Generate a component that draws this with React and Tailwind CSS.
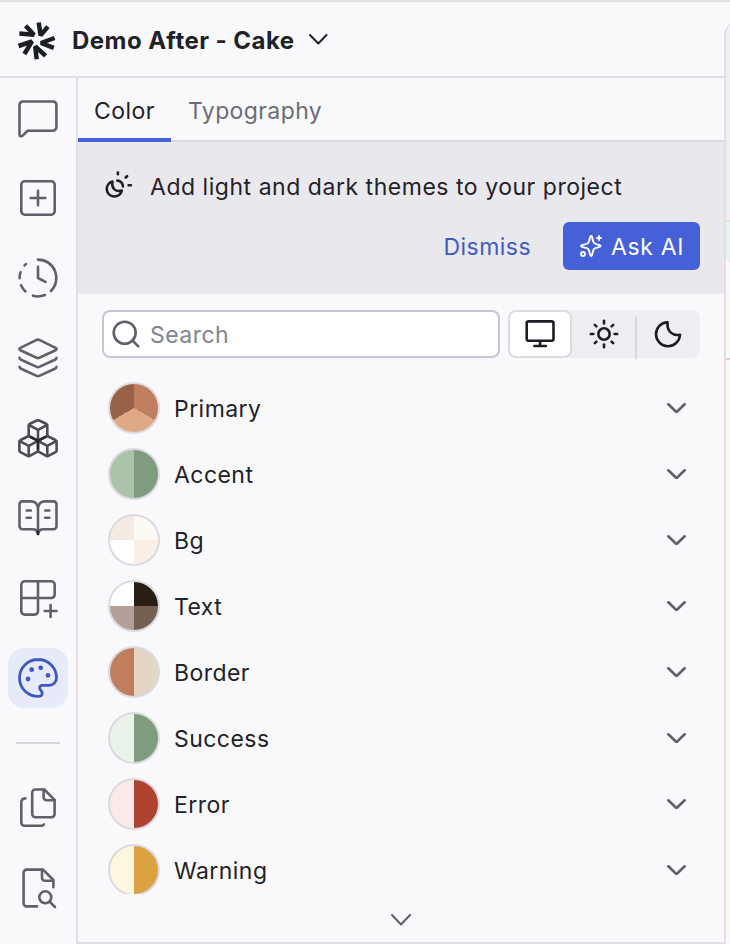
import React from "react";

// Path for a circular arc between two angles, in degrees clockwise from the x axis.
const arc = (cx, cy, r, from, to) => {
  const point = (deg) => {
    const a = (deg * Math.PI) / 180;
    return `${(cx + r * Math.cos(a)).toFixed(2)} ${(cy + r * Math.sin(a)).toFixed(2)}`;
  };
  return `M${point(from)}A${r} ${r} 0 0 1 ${point(to)}`;
};

function Icon({ size = 40, stroke = 2.6, className = "", children }) {
  return (
    <svg
      width={size}
      height={size}
      viewBox={`0 0 ${size} ${size}`}
      fill="none"
      stroke="currentColor"
      strokeWidth={stroke}
      strokeLinecap="round"
      strokeLinejoin="round"
      className={`shrink-0 overflow-visible ${className}`}
    >
      {children}
    </svg>
  );
}

const ChatIcon = () => (
  <Icon>
    <path d="M5 3.5H35a3.4 3.4 0 0 1 3.4 3.4V29.3a3.4 3.4 0 0 1-3.4 3.4H9.6L4.6 37.6C3.4 38.8 1.5 38.3 1.5 36.4V6.9A3.4 3.4 0 0 1 5 3.5z" />
  </Icon>
);
const AddIcon = () => (
  <Icon>
    <rect x="3.3" y="3.3" width="33.4" height="33.4" rx="3.4" />
    <path d="M12.7 20H27.3M20 12.7V27.3" />
  </Icon>
);
const HistoryIcon = () => (
  <Icon>
    <path d={arc(20, 20, 18.4, -90, 45)} />
    <path d={arc(20, 20, 18.4, 68, 106)} />
    <path d={arc(20, 20, 18.4, 133, 157)} />
    <path d={arc(20, 20, 18.4, 179, 198)} />
    <path d={arc(20, 20, 18.4, 223, 229)} />
    <path d="M20 8.7V20L27.5 23.8" />
  </Icon>
);
const LayersIcon = () => (
  <Icon>
    <path d="M18.7 1.9Q20 1.3 21.3 1.9L37.6 9.8Q39.6 11 37.6 12.2L21.3 19.8Q20 20.4 18.7 19.8L2.4 12.2Q.4 11 2.4 9.8z" />
    <path d="M1.5 19.9Q1.6 21 2.6 21.5L18.7 28.9Q20 29.5 21.3 28.9L37.4 21.5Q38.4 21 38.5 19.9" />
    <path d="M1.5 28.9Q1.6 30 2.6 30.5L18.7 37.9Q20 38.5 21.3 37.9L37.4 30.5Q38.4 30 38.5 28.9" />
  </Icon>
);
const CubesIcon = () => (
  <Icon className="text-[#4b4d56]">
    <path d="M18.9 2.5Q20 2 21.1 2.5L28.2 5.8Q29.3 6.4 29.3 7.6V18L20 22.7L10.7 18V7.6Q10.7 6.4 11.8 5.8z" />
    <path d="M11 7L20 11.9L29 7M20 12V22.7" />
    <path d="M10.7 18L2.6 22Q1.4 22.7 1.4 24V32.4Q1.4 33.6 2.5 34.2L9.6 37.8Q10.7 38.4 11.8 37.8L20 33.4V22.9" />
    <path d="M1.8 23.2L10.7 27.9L20 22.9M10.7 28V38" />
    <path d="M29.3 18L37.4 22Q38.6 22.7 38.6 24V32.4Q38.6 33.6 37.5 34.2L30.4 37.8Q29.3 38.4 28.2 37.8L20 33.4" />
    <path d="M38.2 23.2L29.3 27.9L20 22.9M29.3 28V38" />
    <path d="M13 19.2L20 22.8L27 19.2M20 22.8V31" stroke="#25272e" />
  </Icon>
);
const BookIcon = () => (
  <Icon>
    <path d="M20 10C19.4 6 17 3.4 13 3.4H4.4A2.9 2.9 0 0 0 1.5 6.3V28.3A2.9 2.9 0 0 0 4.4 31.2H14.5C17.5 31.2 19.6 32.6 20 36C20.4 32.6 22.5 31.2 25.5 31.2H35.6A2.9 2.9 0 0 0 38.5 28.3V6.3A2.9 2.9 0 0 0 35.6 3.4H27C23 3.4 20.6 6 20 10zM20 10V36" />
    <path d="M8.7 12.5H12.8M8.7 19.8H12.8M27.2 12.5H31.3M27.2 19.8H31.3" />
    <path d="M20 33.6V36" stroke="#25272e" />
  </Icon>
);
const BlocksIcon = () => (
  <Icon>
    <path d="M33.4 20H3.3V6.7A3.4 3.4 0 0 1 6.7 3.3H33.4A3.4 3.4 0 0 1 36.7 6.7V16.6A3.4 3.4 0 0 1 33.3 20M20 3.3V33.2A3.4 3.4 0 0 1 16.6 36.6H6.7A3.4 3.4 0 0 1 3.3 33.2V19" />
    <path d="M26.7 33H38.5M32.6 27V39" />
  </Icon>
);
const PaletteIcon = () => (
  <Icon stroke={2.8}>
    <path d="M20 1.5C9.6 1.5 1.5 9.8 1.5 20C1.5 30.4 10 38.6 21 38.3C23.6 38.2 24.7 36.2 24 34.3C23.2 32.5 21.7 31.6 21.7 30C21.7 28.4 22.8 27.4 24.4 27.4H31C35.4 27.4 38.5 24 38.5 19.5C38.5 10 30.6 1.5 20 1.5z" />
    <g fill="currentColor" stroke="none">
      <circle cx="13.7" cy="11.7" r="2.4" />
      <circle cx="22.7" cy="9.8" r="2.4" />
      <circle cx="30" cy="17.3" r="2.4" />
      <circle cx="10" cy="21" r="2.4" />
    </g>
  </Icon>
);
const CopyIcon = () => (
  <Icon>
    <path d="M26.3 1.5H17.4A3.2 3.2 0 0 0 14.2 4.7V26A3.2 3.2 0 0 0 17.4 29.2H33.4A3.2 3.2 0 0 0 36.6 26V11.8z" />
    <path d="M25.6 1.5V9.2A3 3 0 0 0 28.6 12.2H36.6" />
    <path d="M7.4 10.4Q3.3 10.6 3.3 14.5V34.6A3.2 3.2 0 0 0 6.5 37.8H21.8Q25.2 37.8 25.8 36.4" />
  </Icon>
);
const FileSearchIcon = () => (
  <Icon>
    <path d="M19 38.4H8.8A3.2 3.2 0 0 1 5.6 35.2V4.8A3.2 3.2 0 0 1 8.8 1.6H25L35.4 12V19.3" />
    <path d="M24 1.6V9.8A3 3 0 0 0 27 12.8H35" />
    <circle cx="27.3" cy="29.3" r="6" />
    <path d="M31.8 33.8L37 39" />
  </Icon>
);

const Logo = () => (
  <svg width="40" height="40" viewBox="0 0 40 40" fill="none" stroke="#1b1e24" strokeWidth="4.5" strokeLinejoin="bevel" className="shrink-0">
    <path d="M21.7 1.5L23.6 14.4L30.9 5.6" />
    <path d="M2.4 12.6L17 13.8L8.6 4.8" />
    <path d="M1.6 25L15 20.4L7.4 33" />
    <path d="M19.7 38.2L18.2 25.4L28.6 34.8" />
    <path d="M37.6 17L24 22L36.8 26.8" />
  </svg>
);

const Chevron = ({ width = 19, height = 10.5, stroke = 2, className = "" }) => (
  <svg
    width={width}
    height={height}
    viewBox={`0 0 ${width} ${height}`}
    fill="none"
    stroke="currentColor"
    strokeWidth={stroke}
    strokeLinecap="round"
    strokeLinejoin="round"
    className={`shrink-0 ${className}`}
  >
    <path d={`M${stroke / 2} ${stroke / 2}L${width / 2} ${height - stroke / 2}L${width - stroke / 2} ${stroke / 2}`} />
  </svg>
);

const RAIL = [
  ["Chat", ChatIcon],
  ["Add", AddIcon],
  ["History", HistoryIcon],
  ["Layers", LayersIcon],
  ["Components", CubesIcon],
  ["Library", BookIcon],
  ["Blocks", BlocksIcon],
  ["Theme", PaletteIcon],
];

const GROUPS = [
  ["Primary", ["#bf7f5f", "#e0a986", "#996145"]],
  ["Accent", ["#7f9c7f", "#abc3aa"]],
  ["Bg", ["#fdfaf5", "#f9efe7", "#ffffff", "#f4ece3"]],
  ["Text", ["#2b1f15", "#756154", "#b4a098", "#ffffff"]],
  ["Border", ["#e4d6c5", "#bf7f5f"]],
  ["Success", ["#7f9c7f", "#e9f3ea"]],
  ["Error", ["#b04232", "#fbeae8"]],
  ["Warning", ["#dca140", "#fef6df"]],
];

function Swatch({ colors }) {
  const step = 360 / colors.length;
  const stops = colors.map((c, i) => `${c} ${i * step}deg ${(i + 1) * step}deg`).join(", ");
  return (
    <span className="size-[52px] shrink-0 rounded-full bg-[#dadae0] p-[2px]">
      <span className="block size-full rounded-full" style={{ background: `conic-gradient(${stops})` }} />
    </span>
  );
}

function Rail() {
  return (
    <nav className="flex w-[78px] shrink-0 flex-col border-r-2 border-[#dfdfe4] pl-2 pt-2.5 text-[#5f616a]">
      <div className="flex flex-col gap-5">
        {RAIL.map(([label, Glyph]) => (
          <button
            key={label}
            aria-label={label}
            className={`flex size-[60px] items-center justify-center rounded-2xl ${
              label === "Theme" ? "bg-[#e6eaf9] text-[#3e58c4]" : ""
            }`}
          >
            <Glyph />
          </button>
        ))}
      </div>
      <div className="ml-2 mt-[34px] h-0.5 w-11 shrink-0 bg-[#d4d4da]" />
      <div className="mt-[34px] flex flex-col gap-5">
        <button aria-label="Pages" className="flex size-[60px] items-center justify-center"><CopyIcon /></button>
        <button aria-label="Find in files" className="flex size-[60px] items-center justify-center"><FileSearchIcon /></button>
      </div>
    </nav>
  );
}

function Banner() {
  return (
    <section className="flex h-[152px] shrink-0 flex-col bg-[#e9e8ed] px-6 pt-[27px]">
      <div className="flex h-9 items-center">
        <svg width="30" height="30" viewBox="0 0 30 30" fill="none" stroke="#1b1e24" strokeWidth="2.6" strokeLinecap="round" strokeLinejoin="round" className="shrink-0 overflow-visible">
          <path d="M10.4 9.6A7.6 7.6 0 1 0 19.8 18.6C16.4 19.4 13.6 18.9 12 17C10.4 15 9.8 12.4 10.4 9.6z" />
          <path d="M15.3 8.6A5.6 5.6 0 0 1 20.9 14.4" />
          <path d="M15.9 0.5V2.3M23.7 5.5L25.1 4.2M26.6 13.3H28.9" />
        </svg>
        <p className="ml-[18px] whitespace-nowrap tracking-[0.53px]">Add light and dark themes to your project</p>
      </div>
      <div className="mt-[17px] flex items-center justify-end gap-8">
        <button className="pt-0.5 text-[#3f5bc4]">Dismiss</button>
        <button className="flex h-12 w-[137px] items-center rounded-md bg-[#4660d8] pl-4 text-white">
          <svg width="24" height="24" viewBox="0 0 24 24" fill="none" stroke="currentColor" strokeWidth="1.9" strokeLinecap="round" strokeLinejoin="round" className="shrink-0">
            <path transform="translate(-0.8 -0.1)" d="M12 2.8C12.6 1.8 13.4 1.8 13.8 2.8L15 7.6Q15.5 9.3 17.3 9.9L21.4 11.2C22.6 11.8 22.6 12.6 21.4 13L17.3 14.2Q15.5 14.7 15 16.5L13.8 21.2C13.4 22.3 12.6 22.3 12 21.2L10.8 16.5Q10.3 14.7 8.5 14.2L3.8 13C2.6 12.6 2.6 11.8 3.8 11.2L8.5 9.9Q10.3 9.3 10.8 7.6z" />
            <path d="M20 2V6M18 4H22" />
            <circle cx="4" cy="20" r="2" />
          </svg>
          <span className="ml-2 pt-0.5 tracking-[0.65px]">Ask AI</span>
        </button>
      </div>
    </section>
  );
}

function Toolbar() {
  return (
    <div className="flex h-12 shrink-0 gap-2">
      <div className="flex w-[398px] items-center rounded-lg border-2 border-[#c7c5d4] bg-white pl-2 text-[#82848e]">
        <svg width="28" height="28" viewBox="0 0 28 28" fill="none" stroke="#5f616a" strokeWidth="2.6" strokeLinecap="round" className="shrink-0">
          <circle cx="12.7" cy="12.7" r="11" />
          <path d="M20.5 20.5L26.3 26.3" />
        </svg>
        <span className="ml-2.5 pt-0.5">Search</span>
      </div>
      <div className="flex w-48 rounded-lg bg-[#eeedf1] text-[#1b1e24]">
        <button aria-label="System" className="flex w-16 items-center justify-center rounded-lg border-2 border-[#dbdbe0] bg-white">
          <Icon size={32}>
            <rect x="2.7" y="3.4" width="26.8" height="19.3" rx="2" />
            <path d="M16.1 23V28M10.4 28H21.8" />
          </Icon>
        </button>
        <button aria-label="Light" className="flex w-16 items-center justify-center">
          <Icon size={32}>
            <circle cx="16" cy="16" r="5.7" />
            <path d="M16 2.8V5.4M16 26.6V29.2M2.8 16H5.4M26.6 16H29.2M6.8 6.8L8.4 8.4M23.6 23.6L25.2 25.2M6.8 25.2L8.4 23.6M23.6 8.4L25.2 6.8" />
          </Icon>
        </button>
        <span className="-ml-px -mb-px mt-1.5 w-0.5 bg-[#d9d8df]" />
        <button aria-label="Dark" className="-ml-px flex w-16 items-center justify-center">
          <Icon size={32}>
            <path d="M15.6 4.2A12 12 0 1 0 28 16.8C21 18 14.6 14 15.6 4.2z" />
          </Icon>
        </button>
      </div>
    </div>
  );
}

function ThemePanel() {
  return (
    <main className="flex min-w-0 flex-1 flex-col border-b-2 border-[#dfdfe4]">
      <div className="flex h-16 shrink-0 border-b-2 border-[#dbdae0]">
        <button className="-mb-0.5 w-[93px] border-b-4 border-[#4660d8] pt-1.5 text-center">Color</button>
        <button className="-mb-0.5 ml-[17px] border-b-4 border-transparent pt-1.5 tracking-[0.4px] text-[#6a6c75]">Typography</button>
      </div>
      <Banner />
      <div className="flex min-h-0 flex-1 flex-col px-6 pt-4">
        <Toolbar />
        <ul className="mt-6 flex h-[512px] shrink-0 flex-col gap-3.5 overflow-hidden">
          {GROUPS.map(([name, colors]) => (
            <li key={name} className="flex shrink-0 items-center pl-1.5 pr-[14.5px]">
              <Swatch colors={colors} />
              <span className="ml-3.5 flex-1 pt-0.5">{name}</span>
              <Chevron stroke={2.7} className="text-[#5f616a]" />
            </li>
          ))}
        </ul>
        <Chevron width={20} height={11.5} className="mt-5 self-center text-[#5f616a]" />
      </div>
    </main>
  );
}

export default function App() {
  return (
    <div className="flex h-[944px] w-[730px] flex-col overflow-hidden border-t-2 border-[#e2e1df] bg-[#f9f9fc] font-['Inter','Liberation_Sans',sans-serif] text-[23px] leading-8 tracking-[0.45px] text-[#1f2228]">
      <div className="flex min-h-0 flex-1">
        <div className="flex w-[724px] flex-col">
          <header className="flex h-[76px] shrink-0 items-center border-b-2 border-[#dfdfe4] pl-[17px] pt-[3px]">
            <Logo />
            <h1 className="ml-[15px] text-[24px] leading-8 font-bold tracking-[0.45px]">Demo After - Cake</h1>
            <Chevron width={18.5} height={10.5} stroke={2} className="-mt-0.5 ml-[15px]" />
          </header>
          <div className="flex min-h-0 flex-1">
            <Rail />
            <ThemePanel />
          </div>
        </div>
        <aside className="mt-[18px] flex w-5 shrink-0 flex-col overflow-hidden rounded-tl-2xl border-l-2 border-[#dfdfe4] bg-[#fdf8f4]">
          <div className="h-[202px] shrink-0 border-b-2 border-[#dfdfe4] bg-[#efeff2]" />
          <div className="h-[42px] shrink-0 rounded-bl-lg bg-[#e7f4ea]" />
          <div className="mt-[94px] h-0.5 shrink-0 bg-[#e2d0bc]" />
        </aside>
      </div>
    </div>
  );
}
